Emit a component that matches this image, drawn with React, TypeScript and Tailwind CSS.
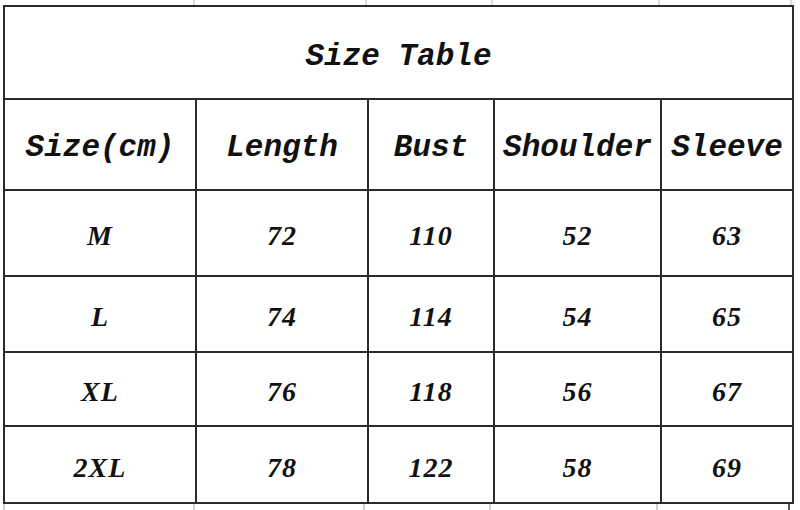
import React from "react";

const cols = "grid-cols-[190px_170px_124px_165px_130px]";
const headFont = { fontFamily: '"Liberation Mono", "DejaVu Sans Mono", monospace' };
const dataFont = { fontFamily: '"Liberation Serif", "DejaVu Serif", serif' };

const headers = ["Size(cm)", "Length", "Bust", "Shoulder", "Sleeve"];
const rows = [
  { h: "h-[84px]", v: ["M", "72", "110", "52", "63"] },
  { h: "h-[74px]", v: ["L", "74", "114", "54", "65"] },
  { h: "h-[72px]", v: ["XL", "76", "118", "56", "67"] },
  { h: "h-[75px]", v: ["2XL", "78", "122", "58", "69"] },
];

export default function App() {
  return (
    <div className="w-[800px] h-[510px] bg-white overflow-hidden relative">
      {/* faint spreadsheet gridlines above the table */}
      <div className="flex h-[5px] ml-[5px]">
        <div className="w-[190px] border-r-2 border-[#dcdcdc]" />
        <div className="w-[172px] border-r-2 border-[#dcdcdc]" />
        <div className="w-[126px] border-r-2 border-[#dcdcdc]" />
        <div className="w-[167px] border-r-2 border-[#dcdcdc]" />
        <div className="w-[132px] border-r-2 border-[#dcdcdc]" />
      </div>
      <div className={`ml-[3px] w-[791px] p-[2px] bg-[#2b2b2b] grid ${cols} gap-[2px]`}>
        <div
          className="col-span-5 h-[91px] bg-white flex items-center justify-center pt-[10px] italic font-bold text-[31px] text-[#111]"
          style={headFont}
        >
          Size Table
        </div>
        {headers.map((t) => (
          <div
            key={t}
            className="h-[89px] bg-white flex items-center justify-center pt-[8px] italic font-bold text-[31px] text-[#111] whitespace-nowrap"
            style={headFont}
          >
            {t}
          </div>
        ))}
        {rows.map((r) =>
          r.v.map((t, i) => (
            <div
              key={r.v[0] + i}
              className={`${r.h} bg-white flex items-center justify-center pt-[6px] italic font-bold text-[28px] tracking-[1px] text-[#111]`}
              style={dataFont}
            >
              {t}
            </div>
          ))
        )}
      </div>
      <div className="flex h-[6px] ml-[3px]">
        <div className="w-[192px] border-l-2 border-r-2 border-[#cfcfcf]" />
        <div className="w-[170px] border-r-2 border-[#cfcfcf]" />
        <div className="w-[126px] border-r-2 border-[#cfcfcf]" />
        <div className="w-[167px] border-r-2 border-[#cfcfcf]" />
        <div className="w-[132px] border-r-2 border-[#555]" />
      </div>
    </div>
  );
}
